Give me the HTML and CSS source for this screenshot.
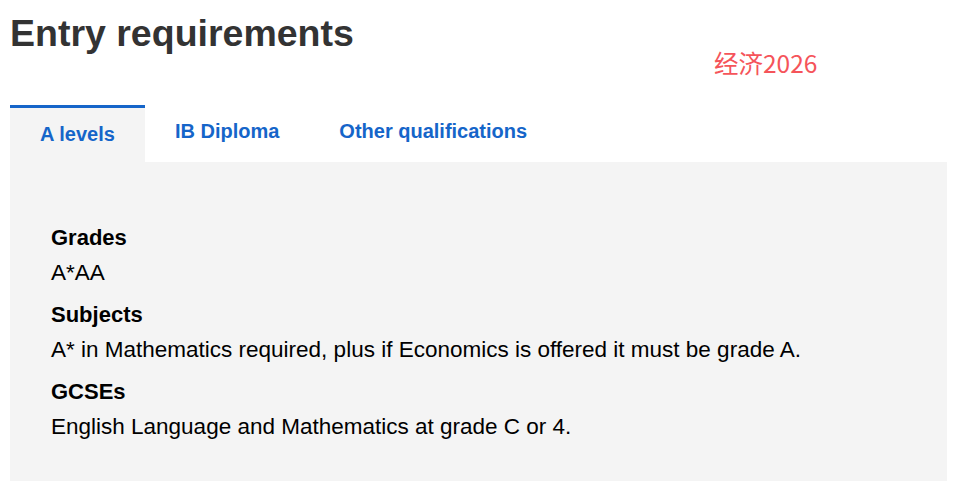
FILE: index.html
```
<!DOCTYPE html>
<html lang="en">
<head>
<meta charset="utf-8">
<title>Entry requirements</title>
<link rel="stylesheet" href="styles.css">
</head>
<body>
<section class="entry">
  <h1 class="entry-title">Entry requirements</h1>
  <span class="watermark">经济2026</span>
  <div class="tabs">
    <a class="tab tab-active" href="#">A levels</a>
    <a class="tab" href="#">IB Diploma</a>
    <a class="tab" href="#">Other qualifications</a>
  </div>
  <div class="panel">
    <dl class="reqs">
      <dt>Grades</dt>
      <dd>A*AA</dd>
      <dt>Subjects</dt>
      <dd>A* in Mathematics required, plus if Economics is offered it must be grade A.</dd>
      <dt>GCSEs</dt>
      <dd>English Language and Mathematics at grade C or 4.</dd>
    </dl>
  </div>
</section>
</body>
</html>
```

FILE: styles.css
```
* { box-sizing: border-box; }
html, body { margin: 0; padding: 0; background: #fff; }
body {
  font-family: "Liberation Sans", Arial, sans-serif;
  color: #000;
  padding: 0 10px;
}
.entry { position: relative; }
.entry-title {
  margin: 13px 0 0 0;
  font-size: 37.5px;
  line-height: 40px;
  font-weight: bold;
  color: #333;
}
.watermark {
  position: absolute;
  left: 704px;
  top: 34px;
  font-family: "Noto Sans CJK SC", sans-serif;
  font-size: 24.5px;
  line-height: 32px;
  color: #f5545a;
}
.tabs {
  display: flex;
  align-items: flex-start;
  margin-top: 52px;
}
.tab {
  display: block;
  padding: 15px 30px 16px;
  font-size: 20px;
  line-height: 23px;
  font-weight: bold;
  color: #1565c9;
  text-decoration: none;
}
.tab-active {
  background: #f4f4f4;
  border-top: 3px solid #1565c9;
}
.panel {
  background: #f4f4f4;
  padding: 59px 41px 40px;
  min-height: 330px;
}
.reqs { margin: 0; }
.reqs dt {
  font-size: 22px;
  line-height: 34.5px;
  font-weight: bold;
}
.reqs dd {
  margin: 0 0 8px 0;
  font-size: 22.5px;
  line-height: 34.5px;
}
```
